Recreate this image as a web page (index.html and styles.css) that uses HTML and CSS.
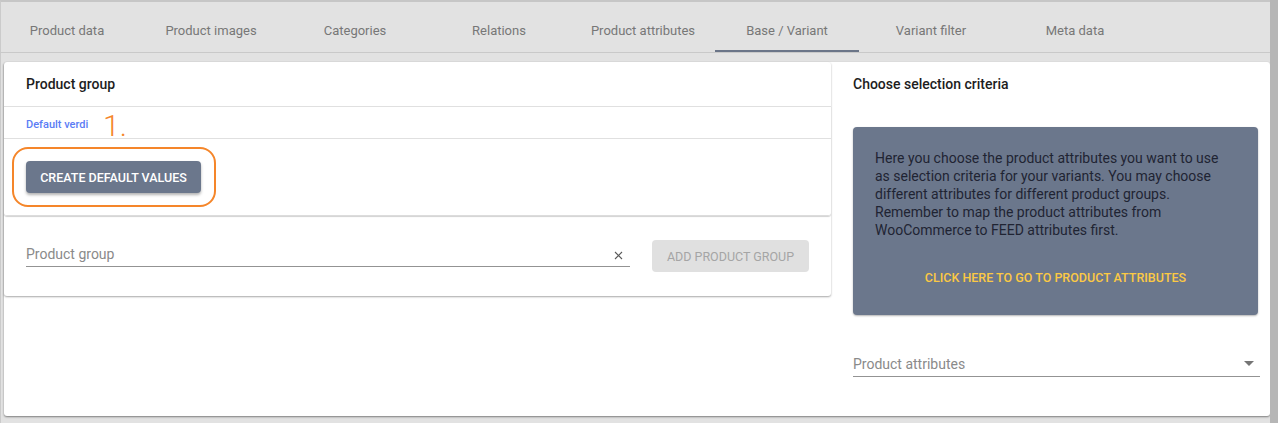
FILE: index.html
```html
<!DOCTYPE html>
<html lang="en">
<head>
    <meta charset="UTF-8">
    <title>Base / Variant</title>
    <link rel="stylesheet" href="styles.css">
</head>
<body>
    <div class="main">
        <div class="tabs">
            <div class="tab">Product data</div>
            <div class="tab">Product images</div>
            <div class="tab">Categories</div>
            <div class="tab">Relations</div>
            <div class="tab">Product attributes</div>
            <div class="tab active">Base / Variant</div>
            <div class="tab">Variant filter</div>
            <div class="tab">Meta data</div>
        </div>

        <div class="sheet">
            <div class="group-card">
                <div class="card-title">Product group</div>

                <div class="panel">
                    <div class="panel-head">
                        <span class="panel-name">Default verdi</span>
                        <span class="step">1.</span>
                    </div>
                    <div class="panel-body">
                        <div class="ring"></div>
                        <button class="btn btn-dark">CREATE DEFAULT VALUES</button>
                    </div>
                </div>

                <div class="add-row">
                    <div class="field">
                        <span class="placeholder">Product group</span>
                        <svg class="clear" width="9" height="9" viewBox="0 0 9 9">
                            <path d="M1 1 L8 8 M8 1 L1 8" stroke="#5a5a5a" stroke-width="1.1" fill="none"/>
                        </svg>
                    </div>
                    <button class="btn btn-disabled">ADD PRODUCT GROUP</button>
                </div>
            </div>

            <div class="criteria">
                <div class="card-title">Choose selection criteria</div>
                <div class="info-box">
                    <p>Here you choose the product attributes you want to use as selection criteria for your variants. You may choose different attributes for different product groups. Remember to map the product attributes from WooCommerce to FEED attributes first.</p>
                    <a class="info-link" href="#">CLICK HERE TO GO TO PRODUCT ATTRIBUTES</a>
                </div>
                <div class="field select">
                    <span class="placeholder">Product attributes</span>
                    <svg class="arrow" width="10" height="5" viewBox="0 0 10 5">
                        <path d="M0 0 L10 0 L5 5 Z" fill="#757575"/>
                    </svg>
                </div>
            </div>
        </div>
    </div>
    <div class="scroll-strip"></div>
</body>
</html>
```

FILE: styles.css
```css
body {
    margin: 0;
    background-color: #e2e2e2;
    font-family: 'Roboto', 'Liberation Sans', sans-serif;
    color: #212121;
    display: flex;
    height: 423px;
    overflow: hidden;
}

.main {
    flex: 1;
    border-top: 2px solid #c6c6c6;
    border-left: 1px solid #cbcbcb;
}

.scroll-strip {
    width: 8px;
    background-color: #b6b6b6;
}

/* tabs */
.tabs {
    display: flex;
    height: 50px;
    border-bottom: 1px solid #c9c9c9;
    margin-left: -6px;
}

.tab {
    width: 144px;
    box-sizing: border-box;
    padding-top: 7px;
    height: 50px;
    line-height: 43px;
    text-align: center;
    font-size: 13px;
    color: #777;
}

.tab.active {
    border-bottom: 2px solid #6b7588;
}

/* content sheet */
.sheet {
    display: flex;
    margin: 9px 0 0 3px;
    height: 354px;
    background-color: #fff;
    border-radius: 3px;
    box-shadow: 0 1px 2px rgba(0, 0, 0, 0.45);
}

.group-card {
    width: 827px;
    align-self: flex-start;
    border-radius: 3px;
    box-shadow: 0 1px 2px rgba(0, 0, 0, 0.35);
}

.card-title {
    height: 44px;
    line-height: 44px;
    padding-left: 22px;
    font-size: 14px;
    font-weight: 500;
    color: #1d1d1d;
}

.panel {
    border-top: 1px solid #e0e0e0;
    border-radius: 0 0 3px 3px;
    box-shadow: 0 1px 1px rgba(0, 0, 0, 0.18);
    border-bottom: 1px solid #dcdcdc;
}

.panel-head {
    position: relative;
    height: 31px;
    line-height: 31px;
    padding-left: 22px;
    border-bottom: 1px solid #e0e0e0;
}

.panel-name {
    font-size: 11px;
    font-weight: 500;
    color: #5b7df5;
}

.step {
    position: absolute;
    left: 99px;
    top: 5px;
    font-size: 30px;
    line-height: 28px;
    font-weight: 300;
    color: #f5862a;
}

.panel-body {
    position: relative;
    padding: 22px;
}

.ring {
    position: absolute;
    left: 8px;
    top: 8px;
    width: 204px;
    height: 60px;
    box-sizing: border-box;
    border: 2px solid #f5862a;
    border-radius: 16px;
}

.btn {
    display: block;
    height: 32px;
    border: none;
    border-radius: 4px;
    font-family: inherit;
    font-size: 12.5px;
    font-weight: 500;
    padding: 0;
}

.btn-dark {
    width: 175px;
    background-color: #6b778c;
    color: #fff;
    box-shadow: 0 2px 3px rgba(0, 0, 0, 0.3);
}

.btn-disabled {
    width: 157px;
    background-color: #e0e0e0;
    color: #a5a5a5;
    font-weight: 400;
}

.add-row {
    display: flex;
    align-items: flex-start;
    padding: 24px 22px;
    gap: 22px;
}

.field {
    flex: 1;
    display: flex;
    align-items: center;
    box-sizing: border-box;
    height: 27px;
    padding-top: 1px;
    border-bottom: 1px solid #939393;
}

.placeholder {
    flex: 1;
    font-size: 14px;
    color: #8a8a8a;
}

.clear {
    margin-right: 7px;
    margin-top: 3px;
}

/* right column */
.criteria {
    width: 407px;
    margin-left: 22px;
}

.criteria .card-title {
    padding-left: 0;
}

.card-title + .info-box {
    margin-top: 21px;
}

.info-box {
    width: 405px;
    height: 188px;
    box-sizing: border-box;
    padding: 22px 22px 0 22px;
    background-color: #6b778c;
    border-radius: 4px;
    box-shadow: 0 1px 2px rgba(0, 0, 0, 0.3);
    text-align: center;
}

.info-box p {
    margin: 0;
    text-align: left;
    font-size: 14px;
    line-height: 18px;
    color: #1f2433;
}

.info-link {
    display: block;
    margin-top: 31px;
    font-size: 12.5px;
    font-weight: 500;
    color: #fbc944;
    text-decoration: none;
}

.select {
    margin-top: 35px;
}

.arrow {
    margin-right: 6px;
}
```
